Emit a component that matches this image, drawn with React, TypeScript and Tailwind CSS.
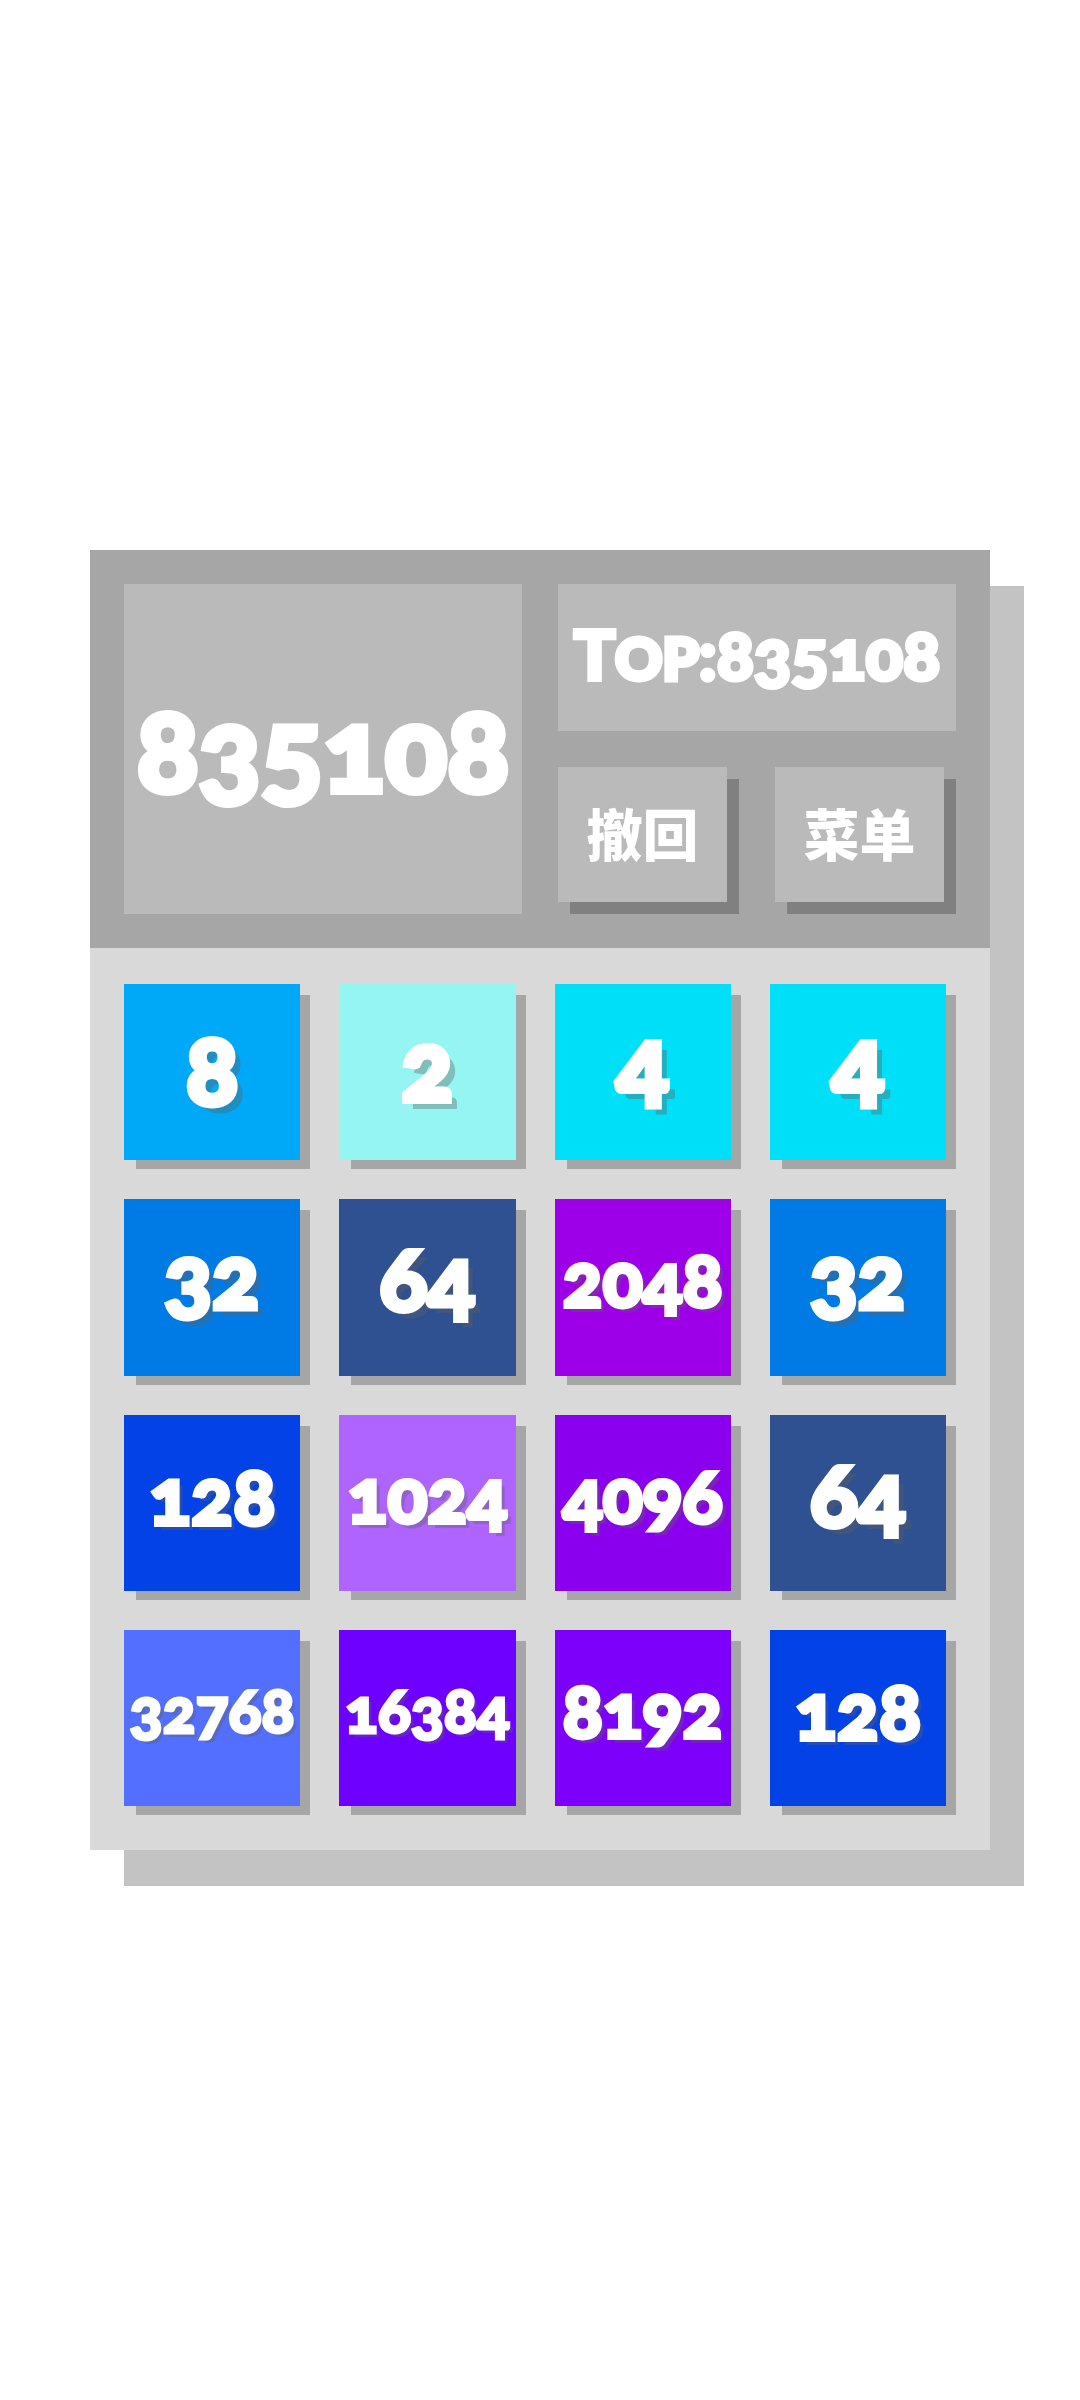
type Tile = { value: number; className: string };

const TILES: Tile[] = [
  { value: 8, className: 'bg-[#00a8f8] pb-2' },
  { value: 2, className: 'bg-[#94f5f3] pb-4' },
  { value: 4, className: 'bg-[#00dff8] pb-6' },
  { value: 4, className: 'bg-[#00dff8] pb-6' },
  { value: 32, className: 'bg-[#007be5] pb-6' },
  { value: 64, className: 'bg-[#2f5191] pb-5' },
  { value: 2048, className: 'bg-[#9d00e8] pb-4' },
  { value: 32, className: 'bg-[#007be5] pb-6' },
  { value: 128, className: 'bg-[#0342e6] pb-4' },
  { value: 1024, className: 'bg-[#af64ff] pb-4' },
  { value: 4096, className: 'bg-[#8a00ee] pb-4' },
  { value: 64, className: 'bg-[#2f5191] pb-5' },
  { value: 32768, className: 'bg-[#536fff] pb-4' },
  { value: 16384, className: 'bg-[#6d00ff] pb-4' },
  { value: 8192, className: 'bg-[#7c00fa] pb-4' },
  { value: 128, className: 'bg-[#0342e6] pb-4' },
];

// Longer numbers get a smaller size and a shorter shadow
const DIGIT_STYLES: Record<number, string> = {
  1: 'text-[96px] [-webkit-text-stroke:6px_white] [text-shadow:8px_8px_0_#60606060]',
  2: 'text-[88px] [-webkit-text-stroke:5px_white] [text-shadow:7px_7px_1px_#60606060]',
  3: 'text-[78px] [-webkit-text-stroke:4px_white] [text-shadow:5px_5px_1px_#60606060]',
  4: 'text-[74px] [-webkit-text-stroke:4px_white] [text-shadow:5px_5px_1px_#60606060]',
  5: 'text-[61px] [-webkit-text-stroke:3px_white] [text-shadow:4px_4px_1px_#60606060]',
};

export default function App(): JSX.Element {
  return (
    <div className="flex min-h-screen items-center justify-center bg-white">
      <main className='w-5/6 bg-[#d9d9d9] font-["Lato",sans-serif] font-black leading-none text-white oldstyle-nums shadow-[34px_36px_0_#c3c3c3]'>
        <Header score={835108} top={835108} />
        <Board tiles={TILES} />
      </main>
    </div>
  );
}

function Header({ score, top }: { score: number; top: number }): JSX.Element {
  return (
    <header className="grid grid-cols-2 gap-9 bg-[#a6a6a6] px-[34px] py-[34px]">
      <div className="flex items-center justify-center bg-[#bababa] pb-1 text-[115px] [-webkit-text-stroke:6px_white]">
        {score}
      </div>
      <div className="flex flex-col gap-9">
        <div className="flex h-[147px] items-center justify-center bg-[#bababa] pb-2 text-[69px] [-webkit-text-stroke:4px_white]">
          <p>
            T<span className="text-[58px] uppercase [-webkit-text-stroke:5px_white]">op</span>:{top}
          </p>
        </div>
        <div className="grid grid-cols-2 gap-9">
          <HeaderButton label="撤回" />
          <HeaderButton label="菜单" />
        </div>
      </div>
    </header>
  );
}

function HeaderButton({ label }: { label: string }): JSX.Element {
  return (
    <button
      type="button"
      className='mb-3 mr-3 h-[135px] bg-[#bababa] font-["Lato","Noto_Sans_CJK_SC",sans-serif] text-[56px] font-black shadow-[12px_12px_0_#808080]'
    >
      {label}
    </button>
  );
}

function Board({ tiles }: { tiles: Tile[] }): JSX.Element {
  return (
    <section className="grid grid-cols-4 gap-x-[29px] gap-y-[39px] px-[34px] pb-11 pt-9">
      {tiles.map((tile, i) => (
        <div
          key={i}
          className={`mr-[10px] flex aspect-square items-center justify-center shadow-[11px_10px_0_-1px_#a6a6a6] ${tile.className} ${DIGIT_STYLES[String(tile.value).length]}`}
        >
          {tile.value}
        </div>
      ))}
    </section>
  );
}
